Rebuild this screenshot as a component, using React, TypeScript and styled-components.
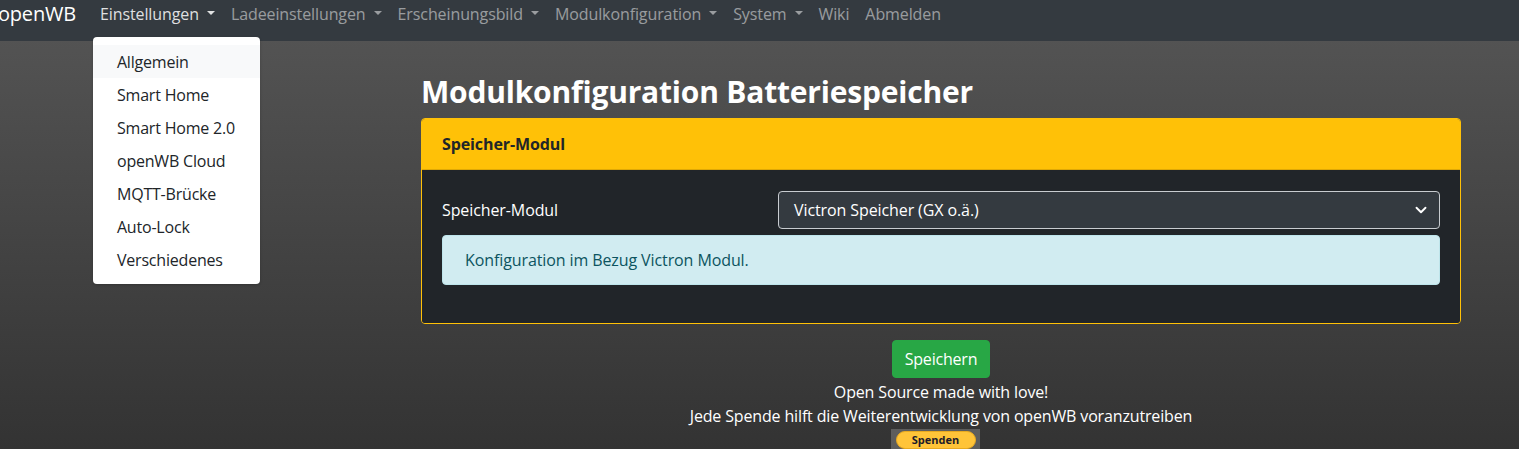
import React from "react";
import styled, { createGlobalStyle } from "styled-components";

const GlobalStyle = createGlobalStyle`
  html, body {
    margin: 0;
    padding: 0;
  }
  body {
    min-height: 100vh;
    font-family: "Open Sans", "Noto Sans", Arial, sans-serif;
    font-size: 16px;
    line-height: 1.5;
    color: #ffffff;
    background: linear-gradient(to bottom, #565656 0%, #333333 100%);
    background-attachment: fixed;
  }
  * { box-sizing: border-box; }
`;

const Page = styled.div`
  min-height: 100vh;
  overflow: hidden;
`;

const Navbar = styled.nav`
  height: 41px;
  background: #343a40;
  display: flex;
  align-items: flex-start;
  padding: 2px 0 0 0;
`;

const Brand = styled.span`
  font-size: 20px;
  line-height: 24px;
  color: #ffffff;
  margin-left: -2px;
  margin-right: 16px;
  letter-spacing: -0.2px;
`;

const NavList = styled.ul`
  display: flex;
  list-style: none;
  margin: 0;
  padding: 0;
`;

const NavItem = styled.li`
  position: relative;
`;

const NavLink = styled.a<{ $active?: boolean }>`
  display: flex;
  align-items: center;
  padding: 0 8px;
  font-size: 16px;
  line-height: 24px;
  letter-spacing: -0.1px;
  color: ${(p) => (p.$active ? "rgba(255,255,255,0.85)" : "rgba(255,255,255,0.5)")};
  text-decoration: none;
  cursor: pointer;
`;

const Caret = styled.span`
  display: inline-block;
  margin-left: 8px;
  width: 0;
  height: 0;
  border-top: 4px solid currentColor;
  border-left: 4px solid transparent;
  border-right: 4px solid transparent;
  margin-top: -2px;
`;

const Menu = styled.div`
  position: absolute;
  top: 35px;
  left: 1px;
  min-width: 167px;
  background: #ffffff;
  border-radius: 4px;
  padding: 8px 0;
  box-shadow: 0 1px 3px rgba(0, 0, 0, 0.2);
  z-index: 10;
`;

const MenuItem = styled.a<{ $hover?: boolean }>`
  display: block;
  height: 33px;
  line-height: 34px;
  padding: 0 24px;
  font-size: 16px;
  letter-spacing: -0.2px;
  color: #212529;
  white-space: nowrap;
  background: ${(p) => (p.$hover ? "#f8f9fa" : "transparent")};
`;

const Main = styled.main`
  width: 1040px;
  margin-left: 421px;
  padding-top: 33px;
  display: flex;
  flex-direction: column;
`;

const Title = styled.h1`
  margin: 0 0 8px 0;
  font-size: 30px;
  font-weight: 700;
  line-height: 1.2;
  letter-spacing: -0.2px;
`;

const Card = styled.section`
  border: 1px solid #ffc107;
  border-radius: 4px;
  overflow: hidden;
  margin-bottom: 16px;
`;

const CardHeader = styled.div`
  background: #ffc107;
  color: #212529;
  font-weight: 700;
  font-size: 16px;
  letter-spacing: -0.1px;
  padding: 13px 20px;
  border-bottom: 1px solid rgba(0, 0, 0, 0.125);
`;

const CardBody = styled.div`
  background: #212529;
  padding: 21px 20px 22px 20px;
  display: flex;
  flex-direction: column;
  gap: 6px;
`;

const FormRow = styled.div`
  display: grid;
  grid-template-columns: 336px 1fr;
  align-items: center;
`;

const Label = styled.label`
  font-size: 16px;
  letter-spacing: -0.1px;
  color: #ffffff;
`;

const Select = styled.div`
  height: 38px;
  display: flex;
  align-items: center;
  justify-content: space-between;
  padding: 0 12px 0 15px;
  background: #343a40;
  border: 1px solid #c8ccd0;
  border-radius: 4px;
  font-size: 16px;
  letter-spacing: -0.1px;
  color: #ffffff;
`;

const Alert = styled.div`
  background: #d1ecf1;
  border: 1px solid #bee5eb;
  border-radius: 4px;
  color: #0c5460;
  padding: 12px 22px;
  font-size: 16px;
  letter-spacing: -0.1px;
  margin-bottom: 16px;
`;

const Footer = styled.div`
  display: flex;
  flex-direction: column;
  align-items: center;
  text-align: center;
  font-size: 16px;
  letter-spacing: -0.15px;
`;

const SaveButton = styled.button`
  height: 38px;
  padding: 0 12px;
  background: #28a745;
  border: 1px solid #28a745;
  border-radius: 4px;
  color: #ffffff;
  font-family: inherit;
  font-size: 16px;
  letter-spacing: -0.2px;
  margin-bottom: 2px;
`;

const FooterLine = styled.div`
  line-height: 24px;
`;

const DonateBox = styled.div`
  margin-top: 1px;
  margin-right: 11px;
  width: 89px;
  height: 24px;
  background: #5d5d5d;
  display: flex;
  justify-content: center;
  padding-top: 2px;
`;

const DonatePill = styled.span`
  width: 80px;
  height: 18px;
  border-radius: 9px;
  background: #ffc439;
  border: 1px solid #e8a91f;
  color: #1b1b2a;
  font-size: 11px;
  font-weight: 700;
  line-height: 16px;
  letter-spacing: 0;
  text-align: center;
`;

const Chevron = () => (
  <svg width="12" height="12" viewBox="0 0 16 16" aria-hidden="true">
    <path d="M2 5l6 6 6-6" fill="none" stroke="#ffffff" strokeWidth="2.5" strokeLinecap="round" strokeLinejoin="round" />
  </svg>
);

const menuItems = [
  "Allgemein",
  "Smart Home",
  "Smart Home 2.0",
  "openWB Cloud",
  "MQTT-Brücke",
  "Auto-Lock",
  "Verschiedenes",
];

const navItems: { label: string; caret: boolean }[] = [
  { label: "Ladeeinstellungen", caret: true },
  { label: "Erscheinungsbild", caret: true },
  { label: "Modulkonfiguration", caret: true },
  { label: "System", caret: true },
  { label: "Wiki", caret: false },
  { label: "Abmelden", caret: false },
];

export default function App() {
  return (
    <Page>
      <GlobalStyle />
      <Navbar>
        <Brand>openWB</Brand>
        <NavList>
          <NavItem>
            <NavLink $active>
              Einstellungen
              <Caret />
            </NavLink>
            <Menu>
              {menuItems.map((m, i) => (
                <MenuItem key={m} $hover={i === 0}>
                  {m}
                </MenuItem>
              ))}
            </Menu>
          </NavItem>
          {navItems.map((n) => (
            <NavItem key={n.label}>
              <NavLink>
                {n.label}
                {n.caret && <Caret />}
              </NavLink>
            </NavItem>
          ))}
        </NavList>
      </Navbar>
      <Main>
        <Title>Modulkonfiguration Batteriespeicher</Title>
        <Card>
          <CardHeader>Speicher-Modul</CardHeader>
          <CardBody>
            <FormRow>
              <Label>Speicher-Modul</Label>
              <Select>
                <span>Victron Speicher (GX o.ä.)</span>
                <Chevron />
              </Select>
            </FormRow>
            <Alert>Konfiguration im Bezug Victron Modul.</Alert>
          </CardBody>
        </Card>
        <Footer>
          <SaveButton>Speichern</SaveButton>
          <FooterLine>Open Source made with love!</FooterLine>
          <FooterLine>Jede Spende hilft die Weiterentwicklung von openWB voranzutreiben</FooterLine>
          <DonateBox>
            <DonatePill>Spenden</DonatePill>
          </DonateBox>
        </Footer>
      </Main>
    </Page>
  );
}
